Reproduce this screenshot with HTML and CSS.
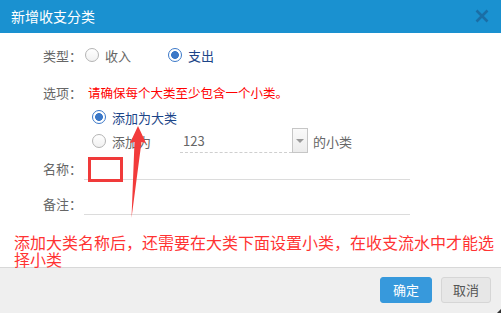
FILE: index.html
```html
<!DOCTYPE html>
<html lang="zh-CN">
<head>
<meta charset="utf-8">
<title>新增收支分类</title>
<link rel="stylesheet" href="styles.css">
</head>
<body>
<div class="dialog">
  <div class="hd">
    <span class="title">新增收支分类</span>
    <svg class="close" width="14" height="14" viewBox="0 0 14 14"><path d="M1.5 1.5 L12.5 12.5 M12.5 1.5 L1.5 12.5" stroke="#1a6ea6" stroke-width="2.6" stroke-linecap="butt"/></svg>
  </div>
  <div class="bd">
    <div class="row r-type">
      <span class="lbl">类型：</span>
      <span class="radio"></span><span class="opt">收入</span>
      <span class="radio on gap"></span><span class="opt sel">支出</span>
    </div>
    <div class="row r-opt">
      <span class="lbl">选项：</span>
      <span class="warn">请确保每个大类至少包含一个小类。</span>
    </div>
    <div class="row sub">
      <span class="radio on"></span><span class="opt sel">添加为大类</span>
    </div>
    <div class="row sub">
      <span class="radio"></span><span class="opt">添加为</span>
      <div class="combo"><span class="val">123</span><span class="drop"><span class="tri"></span></span></div>
      <span class="opt after">的小类</span>
    </div>
    <div class="row field r-name">
      <span class="lbl">名称：</span><div class="inp"></div>
    </div>
    <div class="row field r-note">
      <span class="lbl">备注：</span><div class="inp"></div>
    </div>
    <p class="note">添加大类名称后，还需要在大类下面设置小类，在收支流水中才能选择小类</p>
    <div class="mark-box"></div>
  </div>
  <div class="ft">
    <button class="btn ok">确定</button>
    <button class="btn cancel">取消</button>
  </div>
  <svg class="arrow" width="501" height="313" viewBox="0 0 501 313"><polygon points="138,126 146,143 141.5,142 131.5,218 134.5,142 130,143" fill="#f23b3b"/></svg>
  <span class="grip"></span>
</div>
</body>
</html>
```
FILE: styles.css
```css
html, body {
  margin: 0;
  padding: 0;
  background: #fff;
}
body {
  font-family: "Noto Sans CJK SC", "Microsoft YaHei", sans-serif;
}
.dialog {
  position: relative;
  width: 501px;
  height: 313px;
  display: flex;
  flex-direction: column;
  overflow: hidden;
}
.hd {
  height: 33px;
  flex: none;
  background: #1a91d0;
  display: flex;
  align-items: center;
  justify-content: space-between;
  padding: 0 12px 0 11px;
  box-sizing: border-box;
}
.title {
  color: #fff;
  font-size: 14px;
  line-height: 16px;
  margin-top: -2px;
}
.close {
  display: block;
  margin-top: -1px;
}
.bd {
  position: relative;
  height: 234px;
  flex: none;
  padding-top: 10px;
  box-sizing: border-box;
}
.row {
  display: flex;
  align-items: center;
  height: 24px;
  padding-left: 43px;
  font-size: 13px;
  color: #666;
}
.lbl {
  width: 41px;
  flex: none;
  color: #666;
  font-size: 13px;
}
.r-type .lbl { margin-right: 1px; }
.r-opt { margin-top: 13px; }
.sub {
  margin-top: 1px;
  padding-left: 92px;
}
.sub + .sub { margin-top: 0; }
.r-name { margin-top: 3px; }
.r-note { margin-top: 11px; }
.radio {
  width: 14px;
  height: 14px;
  box-sizing: border-box;
  border-radius: 50%;
  border: 1px solid #b4b4b4;
  background: linear-gradient(#fff, #f1f1f1);
  flex: none;
}
.radio.on {
  border: 1.5px solid #3b78c8;
  background: radial-gradient(circle, #3b78c8 0 3.6px, #fff 4.2px);
}
.radio.gap { margin-left: 37px; }
.opt {
  margin-left: 6px;
  color: #666;
}
.opt.sel { color: #1c4588; }
.warn {
  color: #f00;
  font-size: 12.5px;
  margin-left: 4px;
}
.combo {
  display: flex;
  align-items: stretch;
  margin-left: 29px;
  height: 24px;
}
.val {
  width: 109px;
  padding-left: 3px;
  border-bottom: 1px dashed #cfcfcf;
  color: #666;
  font-size: 13px;
  line-height: 23px;
}
.drop {
  width: 16px;
  box-sizing: border-box;
  border: 1px solid #c6c6c6;
  background: linear-gradient(#fafafa, #ececec);
  display: flex;
  align-items: center;
  justify-content: center;
  margin-top: -1px;
}
.tri {
  width: 0;
  height: 0;
  border-left: 4px solid transparent;
  border-right: 4px solid transparent;
  border-top: 4px solid #9a9a9a;
}
.opt.after { margin-left: 5px; }
.inp {
  width: 326px;
  height: 24px;
  box-sizing: border-box;
  border-bottom: 1px solid #dcdcdc;
}
.note {
  margin: 19px 0 0;
  padding-left: 14px;
  font-size: 16px;
  line-height: 17px;
  color: #f33;
}
.mark-box {
  position: absolute;
  left: 88px;
  top: 124px;
  width: 35px;
  height: 25px;
  box-sizing: border-box;
  border: 3px solid #f03a3a;
}
.ft {
  flex: 1;
  background: #efefef;
  border-top: 1px solid #d8d8d8;
  display: flex;
  justify-content: flex-end;
  align-items: flex-start;
  padding: 9px 10px 0 0;
  gap: 9px;
}
.btn {
  height: 26px;
  width: 52px;
  box-sizing: border-box;
  border-radius: 3px;
  font-family: "Noto Sans CJK SC", "Microsoft YaHei", sans-serif;
  font-size: 13px;
  padding: 0;
  line-height: 24px;
}
.btn.ok {
  background: #3799dc;
  border: 1px solid #3799dc;
  color: #fff;
}
.btn.cancel {
  width: 50px;
  background: #e7e7e7;
  border: 1px solid #d6d6d6;
  color: #555;
}
.arrow {
  position: absolute;
  left: 0;
  top: 0;
  pointer-events: none;
}
.grip {
  position: absolute;
  right: 0;
  bottom: 0;
  width: 0;
  height: 0;
  border-left: 4px solid transparent;
  border-bottom: 4px solid #333;
}
```
